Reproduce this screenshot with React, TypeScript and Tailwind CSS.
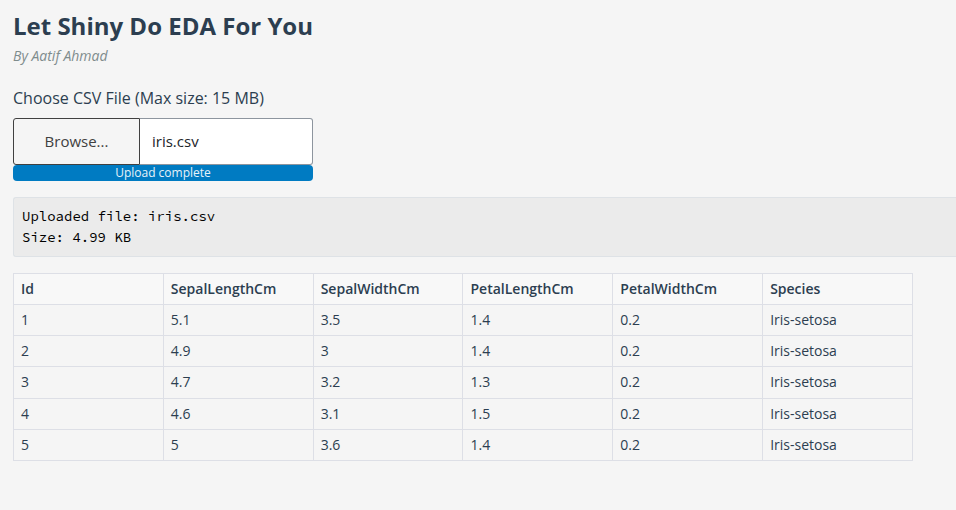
const columns = ["Id", "SepalLengthCm", "SepalWidthCm", "PetalLengthCm", "PetalWidthCm", "Species"];

const rows = [
  ["1", "5.1", "3.5", "1.4", "0.2", "Iris-setosa"],
  ["2", "4.9", "3", "1.4", "0.2", "Iris-setosa"],
  ["3", "4.7", "3.2", "1.3", "0.2", "Iris-setosa"],
  ["4", "4.6", "3.1", "1.5", "0.2", "Iris-setosa"],
  ["5", "5", "3.6", "1.4", "0.2", "Iris-setosa"],
];

export default function App() {
  return (
    <main className="min-h-screen overflow-hidden bg-[#f5f5f5] pt-2 pb-12 pl-[13px] font-['Open_Sans',sans-serif] text-[#2c3e50]">
      <h1 className="text-2xl leading-9 font-bold">Let Shiny Do EDA For You</h1>
      <p className="text-sm leading-6 text-[#7f8c8d] italic">By Aatif Ahmad</p>

      <section className="mt-[18px] w-[300px]">
        <label htmlFor="csv-name" className="block text-base leading-6 whitespace-nowrap">
          Choose CSV File (Max size: 15 MB)
        </label>
        <div className="mt-2 flex h-[47px]">
          <button
            type="button"
            className="w-[127px] shrink-0 rounded-l-[3px] border border-[#404040] text-[15px] text-[#404040]"
          >
            Browse...
          </button>
          <input
            id="csv-name"
            type="text"
            readOnly
            value="iris.csv"
            className="min-w-0 flex-1 rounded-r-[3px] border border-l-0 border-[#8d959e] bg-white px-3 text-[15px] text-[#212529] outline-none"
          />
        </div>
        <div className="h-4 rounded-[4px] bg-[#007bc2] text-center text-xs leading-4 text-[#e6f2f9]">
          Upload complete
        </div>
      </section>

      <pre className="mt-4 rounded-l-[3px] border border-r-0 border-[#dee2e6] bg-[#ebebeb] px-2 py-2 font-['Source_Code_Pro','DejaVu_Sans_Mono',monospace] text-sm leading-[21px] text-black">
        {"Uploaded file: iris.csv\nSize: 4.99 KB"}
      </pre>

      <table className="mt-4 h-[188px] w-[900px] table-fixed border-collapse text-left text-sm">
        <thead className="bg-[#f8f8f8]">
          <tr>
            {columns.map((name) => (
              <th key={name} scope="col" className="h-[31px] border border-[#dddfe6] px-[7px] font-semibold">
                {name}
              </th>
            ))}
          </tr>
        </thead>
        <tbody>
          {rows.map((row) => (
            <tr key={row[0]}>
              {row.map((value, index) => (
                <td key={columns[index]} className="border border-[#dddfe6] px-[7px]">
                  {value}
                </td>
              ))}
            </tr>
          ))}
        </tbody>
      </table>
    </main>
  );
}
